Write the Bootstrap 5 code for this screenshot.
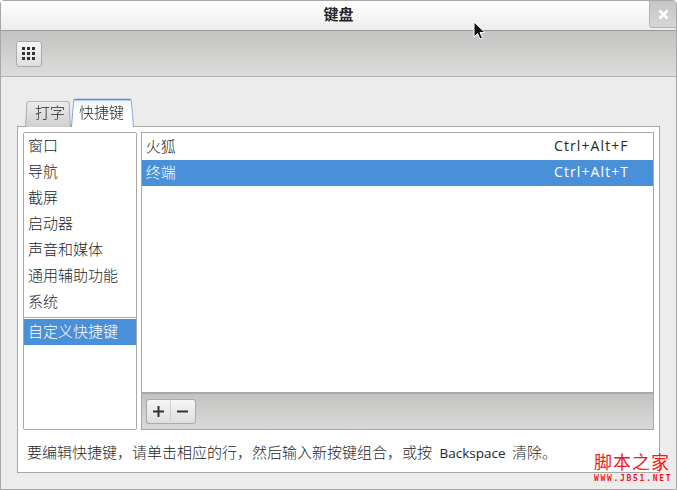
<!DOCTYPE html>
<html lang="zh">
<head>
  <meta charset="UTF-8">
  <title>键盘</title>
  <link href="https://cdn.jsdelivr.net/npm/bootstrap@5.3.0/dist/css/bootstrap.min.css" rel="stylesheet">
  <style>
    html, body { width: 677px; height: 490px; overflow: hidden; }
    body { font-family: "Open Sans", "Noto Sans CJK SC", sans-serif; font-size: 15px; font-weight: 300; color: #23272a; background: #fff; }
    .win { position: relative; width: 677px; height: 490px; background: #ececec; border: 1px solid #a8a8a8; border-top-left-radius: 4px; border-top-right-radius: 4px; }
    .win-title { height: 30px; background: linear-gradient(#ffffff, #ececec); border-bottom: 1px solid #9a9a9a; font-weight: 700; line-height: 27px; }
    .win-close { position: absolute; top: 0; right: 0; width: 27px; height: 27px; background: linear-gradient(#c6c7c5, #d6d7d5); border-left: 1px solid #b4b4b4; border-bottom: 1px solid #b4b4b4; border-bottom-left-radius: 4px; }
    .win-bar { height: 46px; padding: 10px 15px; background: linear-gradient(#c2c4c1, #dcdddb); border-bottom: 1px solid #b0b2af; }
    .grid-btn { width: 26px; height: 26px; padding: 0; border: 1px solid #a9aba8; border-radius: 3px; background: linear-gradient(#f6f6f6, #dededd); }
    .tab-zone { padding: 20px 16px 0; }
    .tab-row { height: 30px; padding-left: 8px; margin-bottom: -1px; position: relative; z-index: 1; align-items: flex-end; }
    .tab-off, .tab-on { position: relative; text-align: center; z-index: 0; }
    .tab-off::before, .tab-on::before { content: ""; position: absolute; inset: 0; z-index: -1; border: 1px solid #a8a8a8; border-bottom: 0; border-radius: 3px 3px 0 0; transform-origin: bottom; transform: perspective(60px) rotateX(9deg); }
    .tab-off { width: 46px; height: 28px; line-height: 26px; padding-left: 4px; }
    .tab-off::before { background: linear-gradient(#ececec, #cfd0ce); }
    .tab-on { width: 63px; height: 31px; line-height: 32px; padding-right: 2px; }
    .tab-on::before { border-top: 2px solid #4a90d9; border-left-color: #7fa9d6; border-right-color: #7fa9d6; background: linear-gradient(#f2f2f2, #ffffff 45%); }
    .sheet { width: 643px; height: 347px; padding: 5px; background: #fff; border: 1px solid #a8a8a8; }
    .side-box { width: 114px; height: 298px; border: 1px solid #a8a8a8; border-radius: 2px; }
    .side-row { height: 26px; line-height: 24px; padding-left: 4px; }
    .side-rule { height: 1px; margin: 2px 0 1px; background: #a8a8a8; }
    .row-sel { background: #4a90d9; color: #fff; }
    .main-box { width: 514px; height: 298px; margin-left: 4px; border: 1px solid #a8a8a8; }
    .key-list { height: 259px; padding-top: 1px; }
    .key-row { height: 26px; line-height: 24px; padding: 0 24px 0 4px; }
    .key-name { font-size: 14px; font-weight: 400; letter-spacing: 1.1px; width: 75px; }
    .key-bar { height: 37px; padding: 5px 4px; background: linear-gradient(#c2c4c1, #d9dad8); border-top: 2px solid #a8a8a8; }
    .pm-btn { width: 25px; height: 25px; padding: 0; border: 1px solid #a9aba8; background: linear-gradient(#f6f6f6, #dededd); color: #2e3436; }
    .pm-btn.first { border-radius: 3px 0 0 3px; border-right: 1px solid #cfcfcf; }
    .pm-btn.last { border-radius: 0 3px 3px 0; border-left: 0; }
    .hint { padding: 12px 0 0 4px; line-height: 20px; white-space: nowrap; }
    .hint-lat { font-size: 13.5px; font-weight: 400; margin: 0 3px 0 4px; }
    .mark-cn { position: absolute; left: 593px; top: 451px; color: #f01820; font-size: 18px; font-weight: 400; line-height: 20px; letter-spacing: 1px; }
    .mark-url { position: absolute; left: 593px; top: 473px; color: #f01820; font-family: "DejaVu Sans Mono", monospace; font-size: 8px; line-height: 10px; font-weight: 700; letter-spacing: 1.7px; }
    .cursor { position: absolute; left: 472px; top: 20px; }
  </style>
</head>
<body>
  <div class="win">
    <div class="win-title text-center">键盘</div>
    <div class="win-close d-flex align-items-center justify-content-center">
      <svg width="11" height="11" viewBox="0 0 11 11"><path d="M1.5 1.5l8 8M9.5 1.5l-8 8" stroke="#fff" stroke-width="2.6" fill="none"/></svg>
    </div>
    <div class="win-bar">
      <button class="grid-btn d-flex align-items-center justify-content-center" type="button">
        <svg width="14" height="14" viewBox="0 0 14 14" fill="#333">
          <rect x="0" y="0" width="3" height="3"/><rect x="5" y="0" width="3" height="3"/><rect x="10" y="0" width="3" height="3"/>
          <rect x="0" y="5" width="3" height="3"/><rect x="5" y="5" width="3" height="3"/><rect x="10" y="5" width="3" height="3"/>
          <rect x="0" y="10" width="3" height="3"/><rect x="5" y="10" width="3" height="3"/><rect x="10" y="10" width="3" height="3"/>
        </svg>
      </button>
    </div>
    <div class="tab-zone">
      <div class="tab-row d-flex">
        <div class="tab-off">打字</div>
        <div class="tab-on">快捷键</div>
      </div>
      <div class="sheet">
        <div class="d-flex">
          <div class="side-box">
            <div class="side-row">窗口</div>
            <div class="side-row">导航</div>
            <div class="side-row">截屏</div>
            <div class="side-row">启动器</div>
            <div class="side-row">声音和媒体</div>
            <div class="side-row">通用辅助功能</div>
            <div class="side-row">系统</div>
            <div class="side-rule"></div>
            <div class="side-row row-sel">自定义快捷键</div>
          </div>
          <div class="main-box d-flex flex-column">
            <div class="key-list">
              <div class="key-row d-flex justify-content-between"><span>火狐</span><span class="key-name">Ctrl+Alt+F</span></div>
              <div class="key-row row-sel d-flex justify-content-between"><span>终端</span><span class="key-name">Ctrl+Alt+T</span></div>
            </div>
            <div class="key-bar d-flex">
              <button class="pm-btn first d-flex align-items-center justify-content-center" type="button">
                <svg width="11" height="11" viewBox="0 0 11 11"><path d="M5.5 0v11M0 5.5h11" stroke="#2e3436" stroke-width="2"/></svg>
              </button>
              <button class="pm-btn last d-flex align-items-center justify-content-center" type="button">
                <svg width="11" height="11" viewBox="0 0 11 11"><path d="M0 5.5h11" stroke="#2e3436" stroke-width="2"/></svg>
              </button>
            </div>
          </div>
        </div>
        <div class="hint">要编辑快捷键，请单击相应的行，然后输入新按键组合，或按<span class="hint-lat"> Backspace </span>清除。</div>
      </div>
    </div>
    <svg class="cursor" width="14" height="20" viewBox="0 0 14 20"><path d="M1 1v15l3.5-3.5 2.5 5.5 2.5-1-2.5-5.5h5z" fill="#111" stroke="#fff" stroke-width="1"/></svg>
    <div class="mark-cn">脚本之家</div>
    <div class="mark-url">WWW.JB51.NET</div>
  </div>
  <script src="https://cdn.jsdelivr.net/npm/bootstrap@5.3.0/dist/js/bootstrap.bundle.min.js"></script>
</body>
</html>
